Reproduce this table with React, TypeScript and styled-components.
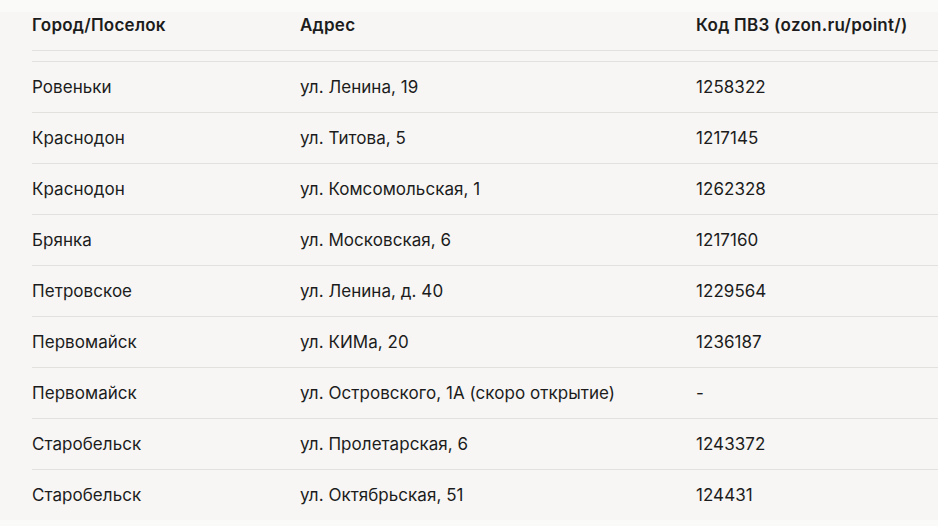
import React from 'react';
import styled, { createGlobalStyle } from 'styled-components';

const GlobalStyle = createGlobalStyle`
    html, body {
        margin: 0;
        padding: 0;
        background: linear-gradient(#fafaf9 0, #fafaf9 12px, #f7f6f4 12px);
        font-family: Inter, "Noto Sans", sans-serif;
        color: #1c1c1c;
    }
`

const Wrapper = styled.div`
    padding-left: 32px;
    overflow: hidden;
`

const Table = styled.table`
    width: 940px;
    border-collapse: collapse;
    font-size: 17px;
    letter-spacing: 0.05px;
`

const HeadCell = styled.th<{ $width: number }>`
    width: ${({ $width }) => $width}px;
    height: 50px;
    padding: 0;
    text-align: left;
    font-weight: 600;
    font-size: 17px;
    letter-spacing: 0.25px;
    border-bottom: 1px solid #e2e1de;
    vertical-align: middle;
`

const SpacerCell = styled.td`
    height: 10px;
    padding: 0;
    border-bottom: 1px solid #e2e1de;
`

const Row = styled.tr`
    & + & td {
        border-top: 1px solid #e2e1de;
    }
`

const Cell = styled.td`
    height: 50px;
    padding: 0;
    font-weight: 400;
    vertical-align: middle;
`

type Point = {
    city: string;
    address: string;
    code: string;
}

const points: Point[] = [
    { city: 'Ровеньки', address: 'ул. Ленина, 19', code: '1258322' },
    { city: 'Краснодон', address: 'ул. Титова, 5', code: '1217145' },
    { city: 'Краснодон', address: 'ул. Комсомольская, 1', code: '1262328' },
    { city: 'Брянка', address: 'ул. Московская, 6', code: '1217160' },
    { city: 'Петровское', address: 'ул. Ленина, д. 40', code: '1229564' },
    { city: 'Первомайск', address: 'ул. КИМа, 20', code: '1236187' },
    { city: 'Первомайск', address: 'ул. Островского, 1А (скоро открытие)', code: '-' },
    { city: 'Старобельск', address: 'ул. Пролетарская, 6', code: '1243372' },
    { city: 'Старобельск', address: 'ул. Октябрьская, 51', code: '124431' },
];

const App: React.FC = () => {
    return (
        <>
            <GlobalStyle />
            <Wrapper>
                <Table>
                    <thead>
                        <tr>
                            <HeadCell $width={268}>Город/Поселок</HeadCell>
                            <HeadCell $width={396}>Адрес</HeadCell>
                            <HeadCell $width={276}>Код ПВЗ (ozon.ru/point/)</HeadCell>
                        </tr>
                    </thead>
                    <tbody>
                        <tr>
                            <SpacerCell colSpan={3} />
                        </tr>
                        {points.map((p, i) => (
                            <Row key={i}>
                                <Cell>{p.city}</Cell>
                                <Cell>{p.address}</Cell>
                                <Cell>{p.code}</Cell>
                            </Row>
                        ))}
                    </tbody>
                </Table>
            </Wrapper>
        </>
    )
}

export default App;
